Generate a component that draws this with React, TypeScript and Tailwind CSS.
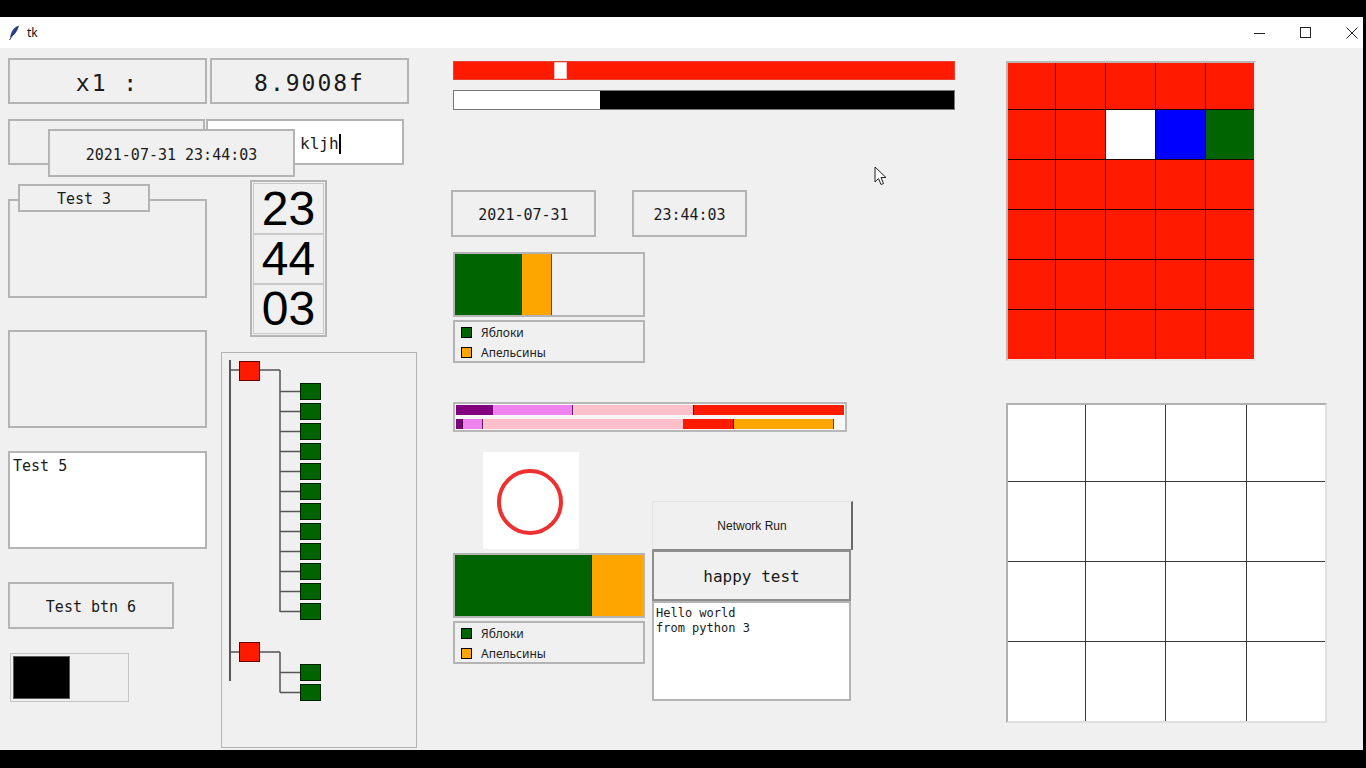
import React from "react";

const mono = "font-['DejaVu_Sans_Mono',monospace]";
const sans = "font-['Liberation_Sans',Arial,sans-serif]";
const ui = "font-['Noto_Sans','Liberation_Sans',sans-serif]";

const gridColors: string[][] = [
  ["r", "r", "r", "r", "r"],
  ["r", "r", "w", "b", "g"],
  ["r", "r", "r", "r", "r"],
  ["r", "r", "r", "r", "r"],
  ["r", "r", "r", "r", "r"],
  ["r", "r", "r", "r", "r"],
];

const cellColor: Record<string, string> = {
  r: "bg-[#ff1a00]",
  w: "bg-white",
  b: "bg-[#0000ff]",
  g: "bg-[#006400]",
};

function Legend() {
  return (
    <div className={`mt-[3px] h-[43px] border-2 border-[#b4b4b4] pl-[6px] pt-[5px] flex flex-col gap-[9px] ${ui} text-[12px] text-[#222]`}>
      <div className="flex items-center h-[11px]">
        <span className="w-[11px] h-[11px] bg-[#006400] border border-black" />
        <span className="ml-[9px] leading-none">Яблоки</span>
      </div>
      <div className="flex items-center h-[11px]">
        <span className="w-[11px] h-[11px] bg-[#ffa500] border border-black" />
        <span className="ml-[9px] leading-none">Апельсины</span>
      </div>
    </div>
  );
}

function Tree() {
  const greens = Array.from({ length: 12 }, (_, i) => 30 + i * 20);
  return (
    <svg width="194" height="394" className="block">
      <g stroke="#555" strokeWidth="1.5" fill="none">
        <line x1="8" y1="7" x2="8" y2="328" strokeWidth="2" />
        <line x1="8" y1="17" x2="17" y2="17" />
        <line x1="38" y1="17" x2="58" y2="17" />
        <line x1="58" y1="17" x2="58" y2="259" />
        {greens.map((y) => (
          <line key={y} x1="58" y1={y + 8.5} x2="78" y2={y + 8.5} />
        ))}
        <line x1="8" y1="299" x2="17" y2="299" />
        <line x1="38" y1="299" x2="58" y2="299" />
        <line x1="58" y1="299" x2="58" y2="339.5" />
        <line x1="58" y1="319.5" x2="78" y2="319.5" />
        <line x1="58" y1="339.5" x2="78" y2="339.5" />
      </g>
      <rect x="17.5" y="8.5" width="20" height="19" fill="#ff1a00" stroke="#600" />
      <rect x="17.5" y="289.5" width="20" height="19" fill="#ff1a00" stroke="#600" />
      {greens.map((y) => (
        <rect key={y} x="78.5" y={y + 0.5} width="20" height="16" fill="#006400" stroke="#002000" />
      ))}
      <rect x="78.5" y="311.5" width="20" height="16" fill="#006400" stroke="#002000" />
      <rect x="78.5" y="331.5" width="20" height="16" fill="#006400" stroke="#002000" />
    </svg>
  );
}

export default function App() {
  return (
    <div className="w-[1366px] h-[768px] bg-black overflow-hidden flex flex-col">
      <div className="h-[17px] shrink-0" />
      <div className="w-[1363px] flex flex-col">
        {/* title bar */}
        <div className="h-[31px] bg-white flex items-center pl-[8px]">
          <svg width="12" height="16" viewBox="0 0 12 16">
            <path d="M11 0.5 C7 1.5 3.5 5 2.5 10.5 L2 12.5 C5.5 11 9.5 7 11 0.5 Z" fill="#2f4f8f" />
            <path d="M9.5 2 L1.5 15" stroke="#1b2d52" strokeWidth="1" />
          </svg>
          <span className={`ml-[7px] text-[12px] text-[#111] ${ui}`}>tk</span>
          <div className="ml-auto flex items-center h-full">
            <svg width="12" height="12" className="mr-[34px]">
              <line x1="0" y1="6.5" x2="11" y2="6.5" stroke="#222" strokeWidth="1" />
            </svg>
            <svg width="12" height="12" className="mr-[34px]">
              <rect x="0.5" y="0.5" width="10" height="10" fill="none" stroke="#222" strokeWidth="1" />
            </svg>
            <svg width="12" height="12" className="mr-[5px]">
              <path d="M0.5 0.5 L11.5 11.5 M11.5 0.5 L0.5 11.5" stroke="#222" strokeWidth="1" />
            </svg>
          </div>
        </div>

        {/* body */}
        <div className="relative h-[702px] bg-[#f0f0f0] flex items-start pl-[8px] text-[#1a1a1a]">
          {/* left block */}
          <div className="w-[409px] pt-[10px] flex flex-col">
            <div className="flex">
              <div className={`w-[199px] h-[46px] border-2 border-[#b4b4b4] pt-[4px] flex items-center justify-center text-[23px] tracking-[2px] ${mono}`}>
                x1 :
              </div>
              <div className={`ml-[3px] w-[199px] h-[46px] border-2 border-[#b4b4b4] pt-[4px] flex items-center justify-center text-[23px] tracking-[2px] ${mono}`}>
                8.9008f
              </div>
            </div>

            <div className="relative mt-[15px] flex h-[46px]">
              <div className="w-[197px] h-full border-2 border-[#b4b4b4]" />
              <div className={`ml-[1px] w-[198px] h-full bg-white border-2 border-[#b4b4b4] pt-[4px] flex items-center pl-[92px] text-[16px] ${mono}`}>
                <span>kljh</span>
                <span className="w-[2px] h-[20px] bg-black" />
              </div>
              <div className={`absolute left-[40px] top-[10px] w-[247px] h-[48px] bg-[#f0f0f0] border-2 border-[#b4b4b4] pt-[4px] flex items-center justify-center text-[15px] ${mono}`}>
                2021-07-31 23:44:03
              </div>
            </div>

            <div className="mt-[15px] flex items-start">
              <div className="w-[199px] flex flex-col">
                <div className="relative mt-[4px] h-[114px]">
                  <div className="mt-[15px] h-[99px] border-2 border-[#b4b4b4]" />
                  <div className={`absolute top-0 left-[10px] w-[132px] h-[28px] bg-[#f0f0f0] border-2 border-[#b4b4b4] pt-[3px] flex items-center justify-center text-[15px] ${mono}`}>
                    Test 3
                  </div>
                </div>
                <div className="mt-[32px] h-[98px] border-2 border-[#b4b4b4]" />
                <div className={`mt-[23px] h-[98px] bg-white border-2 border-[#b4b4b4] pl-[3px] pt-[4px] text-[15px] leading-[18px] ${mono}`}>
                  Test 5
                </div>
                <div className={`mt-[33px] w-[166px] h-[47px] border-2 border-[#b4b4b4] pt-[4px] flex items-center justify-center text-[15px] ${mono}`}>
                  Test btn 6
                </div>
                <div className="mt-[24px] ml-[2px] w-[119px] h-[49px] border border-[#c4c4c4] p-[2px]">
                  <div className="w-[57px] h-full bg-black border border-[#5a5a5a]" />
                </div>
              </div>

              <div className="ml-[14px] w-[196px] flex flex-col">
                <div className={`ml-[29px] w-[77px] h-[157px] border-2 border-[#b4b4b4] p-px flex flex-col ${sans} text-[48px] leading-none text-black`}>
                  <div className="h-[51px] border border-[#c8c8c8] flex items-center justify-center">23</div>
                  <div className="h-[50px] border border-[#c8c8c8] flex items-center justify-center">44</div>
                  <div className="h-[50px] border border-[#c8c8c8] flex items-center justify-center">03</div>
                </div>
                <div className="mt-[15px] h-[396px] border border-[#b4b4b4]">
                  <Tree />
                </div>
              </div>
            </div>
          </div>

          {/* middle block */}
          <div className="ml-[34px] w-[504px] pt-[13px] flex flex-col">
            <div className="relative ml-[2px] w-[502px] h-[19px] bg-[#ff1a00] border border-[#e84030]">
              <div className="absolute left-[100px] top-0 w-[13px] h-full bg-white border border-[#f4c0c0]" />
            </div>
            <div className="mt-[10px] ml-[2px] w-[502px] h-[20px] border border-[#777] flex">
              <div className="w-[146px] h-full bg-white" />
              <div className="flex-1 h-full bg-black" />
            </div>

            <div className="mt-[80px] flex">
              <div className={`w-[145px] h-[47px] border-2 border-[#b4b4b4] pt-[4px] flex items-center justify-center text-[15px] ${mono}`}>
                2021-07-31
              </div>
              <div className={`ml-[36px] w-[115px] h-[47px] border-2 border-[#b4b4b4] pt-[4px] flex items-center justify-center text-[15px] ${mono}`}>
                23:44:03
              </div>
            </div>

            <div className="mt-[15px] ml-[2px] w-[192px]">
              <div className="h-[65px] border-2 border-[#b4b4b4] flex">
                <div className="w-[67px] h-full bg-[#006400]" />
                <div className="w-[30px] h-full bg-[#ffa500] border-r border-[#6b4a00]" />
              </div>
              <Legend />
            </div>

            <div className="mt-[39px] ml-[2px] w-[394px] border-2 border-[#b8b8b8] bg-[#f6f6f6] p-px flex flex-col gap-[4px]">
              <div className="h-[10px] flex">
                <div className="w-[37px] bg-[#800080]" />
                <div className="w-[80px] bg-[#ee82ee] border-r border-[#602060]" />
                <div className="w-[120px] bg-[#ffc0cb]" />
                <div className="flex-1 bg-[#ff1a00] border-l border-[#800000]" />
              </div>
              <div className="h-[10px] flex">
                <div className="w-[7px] bg-[#800080] border-r border-[#400040]" />
                <div className="w-[20px] bg-[#ee82ee] border-r border-[#602060]" />
                <div className="w-[200px] bg-[#ffc0cb]" />
                <div className="w-[51px] bg-[#ff1a00] border-r border-[#500000]" />
                <div className="w-[100px] bg-[#ffa500] border-r border-[#6b4a00]" />
                <div className="flex-1 bg-[#f8f8f8]" />
              </div>
            </div>

            <div className="flex items-start">
              <div className="w-[194px] flex flex-col">
                <div className="mt-[20px] ml-[32px] w-[96px] h-[97px] bg-white">
                  <svg width="96" height="97">
                    <circle cx="47" cy="50" r="31" fill="none" stroke="#ee3030" strokeWidth="4" />
                  </svg>
                </div>
                <div className="mt-[4px] ml-[2px] w-[192px]">
                  <div className="h-[65px] border-2 border-[#b4b4b4] flex">
                    <div className="w-[137px] h-full bg-[#006400] border-r border-[#203000]" />
                    <div className="flex-1 h-full bg-[#ffa500]" />
                  </div>
                  <Legend />
                </div>
              </div>

              <div className="ml-[7px] mt-[69px] w-[201px] flex flex-col">
                <div className={`h-[49px] border-t border-l border-[#e4e4e4] border-r-2 border-r-[#6a6a6a] border-b border-b-[#8a8a8a] flex items-center justify-center text-[12px] ${sans}`}>
                  Network Run
                </div>
                <div className={`w-[199px] h-[51px] border-2 border-[#8e8e8e] pt-[2px] flex items-center justify-center text-[16px] ${mono}`}>
                  happy test
                </div>
                <div className={`w-[199px] h-[100px] bg-white border-2 border-[#b4b4b4] pl-[2px] pt-[3px] text-[12px] leading-[15px] ${mono} whitespace-pre`}>
                  {"Hello world\nfrom python 3"}
                </div>
              </div>
            </div>
          </div>

          {/* right block */}
          <div className="ml-[51px] pt-[13px] flex flex-col">
            <div className="w-[250px] h-[300px] border-2 border-[#b8b8b8] border-r-[#e8e8e8] border-b-[#e8e8e8] bg-[#200000] grid grid-cols-[47px_49px_49px_49px_48px] grid-rows-[46px_49px_49px_49px_49px_49px] gap-px">
              {gridColors.flat().map((c, i) => (
                <div key={i} className={cellColor[c]} />
              ))}
            </div>
            <div className="mt-[42px] w-[321px] h-[320px] border-2 border-[#b0b0b0] border-r-[#e0e0e0] border-b-[#e0e0e0] bg-[#3a3a3a] grid grid-cols-[77px_79px_80px_78px] grid-rows-[76px_79px_79px_79px] gap-px">
              {Array.from({ length: 16 }, (_, i) => (
                <div key={i} className="bg-white" />
              ))}
            </div>
          </div>

          {/* mouse pointer */}
          <svg width="14" height="20" viewBox="0 0 14 20" className="absolute left-[874px] top-[118px]">
            <path d="M1 1 L1 16 L4.5 12.5 L7 18.5 L9.5 17.5 L7 11.5 L12 11.5 Z" fill="white" stroke="#222" strokeWidth="1" />
          </svg>
        </div>
      </div>
    </div>
  );
}
